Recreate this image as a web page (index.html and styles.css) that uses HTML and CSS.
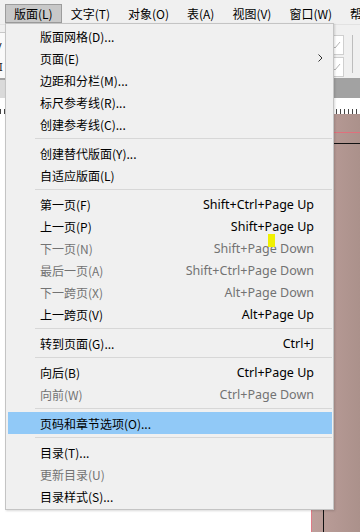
FILE: index.html
```html
<!DOCTYPE html>
<html lang="zh-CN">
<head>
<meta charset="utf-8">
<title>版面菜单</title>
<link rel="stylesheet" href="styles.css">
</head>
<body>
<div class="screen">
  <nav class="menubar">
    <span class="mb-item active">版面(L)</span>
    <span class="mb-item">文字(T)</span>
    <span class="mb-item">对象(O)</span>
    <span class="mb-item">表(A)</span>
    <span class="mb-item">视图(V)</span>
    <span class="mb-item">窗口(W)</span>
    <span class="mb-item">帮助(H)</span>
  </nav>

  <div class="workspace">
    <div class="controlbar">
      <div class="cb-left"><span class="cb-v">V</span><span class="cb-i">I</span></div>
      <div class="cb-right">
        <div class="checks">
          <span class="check"><svg width="10" height="8" viewBox="0 0 10 8"><polyline points="1,4 4,7 9,1" fill="none" stroke="#b5b5b5" stroke-width="1"/></svg></span>
          <span class="check"><svg width="10" height="8" viewBox="0 0 10 8"><polyline points="1,4 4,7 9,1" fill="none" stroke="#b5b5b5" stroke-width="1"/></svg></span>
        </div>
        <span class="vline"></span>
      </div>
    </div>
    <div class="tabbar"><div class="tab"></div></div>
    <div class="ruler"></div>
    <div class="canvas">
      <div class="page"></div>
      <div class="margin-guide"></div>
      <div class="pasteboard"></div>
    </div>
  </div>

  <div class="dropdown">
    <div class="item"><span class="label">版面网格(D)...</span></div>
    <div class="item"><span class="label">页面(E)</span><svg class="arrow" width="5" height="8" viewBox="0 0 5 8"><polyline points="0.5,0.5 4,4 0.5,7.5" fill="none" stroke="#333" stroke-width="1"/></svg></div>
    <div class="item"><span class="label">边距和分栏(M)...</span></div>
    <div class="item"><span class="label">标尺参考线(R)...</span></div>
    <div class="item"><span class="label">创建参考线(C)...</span></div>
    <div class="sep"></div>
    <div class="item"><span class="label">创建替代版面(Y)...</span></div>
    <div class="item"><span class="label">自适应版面(L)</span></div>
    <div class="sep"></div>
    <div class="item"><span class="label">第一页(F)</span><span class="key">Shift+Ctrl+Page Up</span></div>
    <div class="item"><span class="label">上一页(P)</span><span class="key">Shift+Page Up</span></div>
    <div class="item disabled"><span class="label">下一页(N)</span><span class="key">Shift+Page Down</span></div>
    <div class="item disabled"><span class="label">最后一页(A)</span><span class="key">Shift+Ctrl+Page Down</span></div>
    <div class="item disabled"><span class="label">下一跨页(X)</span><span class="key">Alt+Page Down</span></div>
    <div class="item"><span class="label">上一跨页(V)</span><span class="key">Alt+Page Up</span></div>
    <div class="sep"></div>
    <div class="item"><span class="label">转到页面(G)...</span><span class="key">Ctrl+J</span></div>
    <div class="sep"></div>
    <div class="item"><span class="label">向后(B)</span><span class="key">Ctrl+Page Up</span></div>
    <div class="item disabled"><span class="label">向前(W)</span><span class="key">Ctrl+Page Down</span></div>
    <div class="sep"></div>
    <div class="item hover"><span class="label">页码和章节选项(O)...</span></div>
    <div class="sep"></div>
    <div class="item"><span class="label">目录(T)...</span></div>
    <div class="item disabled"><span class="label">更新目录(U)</span></div>
    <div class="item"><span class="label">目录样式(S)...</span></div>
  </div>

  <span class="cursor-mark"></span>
</div>
</body>
</html>
```

FILE: styles.css
```css
html, body {
  margin: 0;
  padding: 0;
}
body {
  width: 360px;
  height: 532px;
  overflow: hidden;
  background: #ffffff;
  font-family: "Noto Sans", "Noto Sans CJK SC", sans-serif;
  font-size: 12px;
  color: #000;
}
.screen {
  position: relative;
  width: 360px;
  height: 532px;
  overflow: hidden;
  display: flex;
  flex-direction: column;
}

/* menu bar */
.menubar {
  height: 24px;
  flex: none;
  display: flex;
  align-items: flex-start;
  padding: 4px 0 0 5px;
  box-sizing: border-box;
  background: #f0f0f0;
  white-space: nowrap;
  overflow: hidden;
}
.mb-item {
  flex: none;
  height: 19px;
  line-height: 18px;
  padding: 0 8px;
  border: 1px solid transparent;
  box-sizing: border-box;
  font-family: "Noto Sans CJK SC", sans-serif;
}
.mb-item.active {
  background: #c8c8c8;
  border-color: #9c9c9c;
}

/* workspace behind the menu */
.workspace {
  flex: 1;
  display: flex;
  flex-direction: column;
}
.controlbar {
  height: 54px;
  flex: none;
  display: flex;
  justify-content: space-between;
  background: #f0f0f0;
  border-top: 1px solid #e2e2e2;
  box-sizing: border-box;
}
.cb-left {
  width: 5px;
  background: #fafafa;
  border-top: 1px solid #c8c8c8;
  margin-top: 7px;
  display: flex;
  flex-direction: column;
  overflow: hidden;
  font-size: 11px;
  line-height: 12px;
  color: #222;
}
.cb-v { margin: 8px 0 0 -5px; }
.cb-i { margin: 8px 0 0 -1px; }
.cb-right {
  display: flex;
  align-items: flex-start;
  padding: 10px 7px 0 0;
}
.checks {
  display: flex;
  flex-direction: column;
  gap: 2px;
  margin-right: 8px;
}
.check {
  width: 30px;
  height: 20px;
  box-sizing: border-box;
  background: #ffffff;
  border: 1px solid #cfcfcf;
  display: flex;
  align-items: center;
  justify-content: flex-end;
  padding-right: 2px;
}
.vline {
  width: 1px;
  height: 38px;
  background: #bdbdbd;
}
.tabbar {
  height: 20px;
  flex: none;
  background: #a2a2a2;
}
.tab {
  width: 200px;
  height: 18px;
  margin-top: 2px;
  background: #dadada;
}
.ruler {
  height: 16px;
  flex: none;
  background:
    repeating-linear-gradient(to right, #444 0 1px, transparent 1px 4px) left bottom / 100% 5px no-repeat,
    #ffffff;
}
.canvas {
  flex: 1;
  display: flex;
}
.page {
  width: 311px;
  background: #ffffff;
}
.margin-guide {
  width: 1px;
  background: #e07a86;
}
.pasteboard {
  flex: 1;
  background:
    linear-gradient(#111, #111) 11px 0 / 1px 100% no-repeat,
    linear-gradient(#e0707c, #e0707c) 0 18px / 100% 1px no-repeat,
    linear-gradient(#111, #111) 0 29px / 100% 1px no-repeat,
    linear-gradient(to right, #bd9f9b, #ab918b);
}

/* dropdown menu */
.dropdown {
  position: absolute;
  left: 5px;
  top: 23px;
  width: 329px;
  box-sizing: border-box;
  background: #f0f0f0;
  border: 1px solid #c4c4c4;
  padding: 1px 0 2px;
  box-shadow: 1px 1px 2px rgba(0, 0, 0, 0.15);
  font-family: "Noto Sans CJK SC", sans-serif;
}
.item {
  height: 22px;
  display: flex;
  align-items: center;
  margin: 0 1px 0 2px;
  padding: 0 18px 0 32px;
  white-space: nowrap;
}
.item .key {
  margin-left: auto;
  font-family: "Noto Sans", "Noto Sans CJK SC", sans-serif;
  font-size: 12.5px;
}
.item .arrow {
  margin-left: auto;
  margin-right: -9px;
}
.item.disabled {
  color: #737373;
}
.item.hover {
  background: #91c9f7;
}
.sep {
  height: 1px;
  margin: 3px 1px 3px 29px;
  background: #d7d7d7;
}

.cursor-mark {
  position: absolute;
  left: 268px;
  top: 234px;
  width: 7px;
  height: 13px;
  background: #f0f000;
}
```
